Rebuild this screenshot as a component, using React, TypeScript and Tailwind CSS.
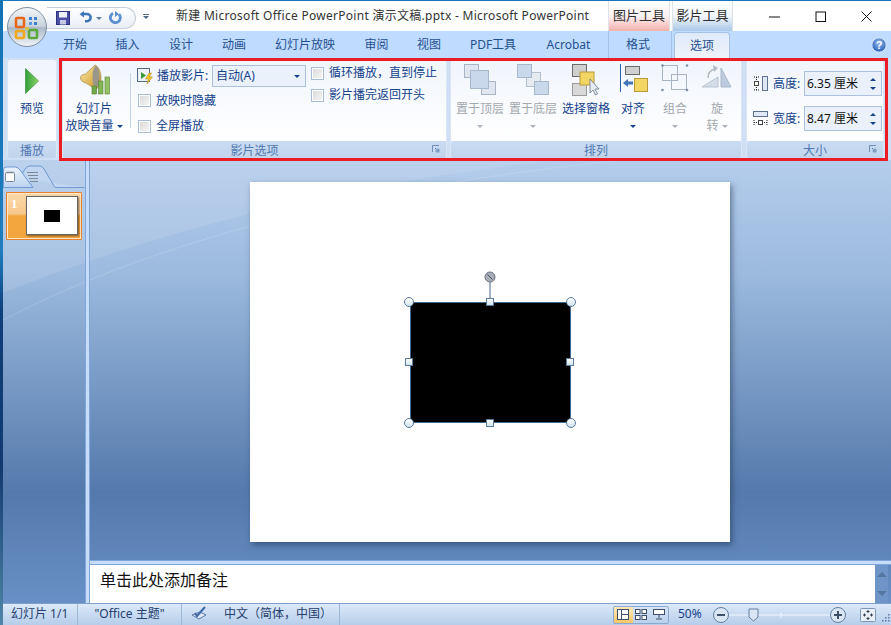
import React from 'react';

const blue = 'text-[#15428b]';

function OfficeButton() {
  return (
    <svg width="42" height="42" viewBox="0 0 42 42" className="absolute left-[3px] top-[6px]">
      <defs>
        <linearGradient id="orb" x1="0" y1="0" x2="0" y2="1">
          <stop offset="0" stopColor="#f4f6f8" />
          <stop offset="0.48" stopColor="#c9d3de" />
          <stop offset="0.52" stopColor="#aab9c8" />
          <stop offset="1" stopColor="#f2f5f8" />
        </linearGradient>
      </defs>
      <circle cx="21" cy="21" r="19.5" fill="url(#orb)" stroke="#7d8ea3" strokeWidth="1" />
      <rect x="10" y="12" width="8" height="9" rx="1" fill="none" stroke="#e8681a" strokeWidth="2.6" />
      <rect x="23" y="11" width="3" height="3" fill="#3d7fd0" />
      <rect x="28" y="11" width="3" height="3" fill="#3d7fd0" />
      <rect x="23" y="16" width="3" height="3" fill="#5a9bdc" />
      <rect x="28" y="16" width="3" height="3" fill="#3d7fd0" />
      <rect x="10" y="25" width="8" height="7" rx="1" fill="none" stroke="#f0a81e" strokeWidth="2.6" />
      <rect x="23" y="24" width="8" height="8" rx="1" fill="none" stroke="#5aa83a" strokeWidth="2.6" />
      <rect x="19" y="21" width="4" height="3" fill="#d9c04a" />
    </svg>
  );
}

function QuickAccess() {
  return (
    <div className="absolute left-[44px] top-[7px] flex h-[22px] w-[89px] items-center rounded-r-[11px] border border-l-0 border-[#c6cfda] bg-gradient-to-b from-white to-[#e8eef6] pl-[9px]">
      <svg width="14" height="14" viewBox="0 0 14 14">
        <rect x="0.5" y="0.5" width="13" height="13" fill="#4a4fa8" stroke="#2d3080" />
        <rect x="3" y="1" width="8" height="5.5" fill="#eef0fa" />
        <rect x="4" y="9" width="6" height="4.5" fill="#c4c8e2" />
      </svg>
      <svg width="13" height="14" viewBox="0 0 13 14" className="ml-[9px]">
        <path d="M3 3h5a3.6 3.6 0 0 1 0 7.2H6" fill="none" stroke="#3f74b8" strokeWidth="2.6" />
        <path d="M5 0v6.5L0.5 3.2z" fill="#3f74b8" />
      </svg>
      <span className="ml-[4px] h-0 w-0 border-x-[3px] border-t-[3px] border-x-transparent border-t-[#5d7da6]" />
      <svg width="13" height="14" viewBox="0 0 13 14" className="ml-[7px]">
        <path d="M4 2.2a5 5 0 1 0 6 1" fill="none" stroke="#5b8fd0" strokeWidth="2.8" />
        <path d="M6 0v6l4-3z" fill="#5b8fd0" />
      </svg>
    </div>
  );
}

function TitleBar() {
  return (
    <div className="flex h-[31px] items-center border-t border-t-[#1a76b8] bg-white">
      <div className="ml-[138px] flex w-[10px] flex-col items-center gap-[1px]">
        <span className="h-px w-[6px] bg-[#50688a]" />
        <span className="h-0 w-0 border-x-[3px] border-t-[3px] border-x-transparent border-t-[#50688a]" />
      </div>
      <div className="ml-[25px] w-[432px] whitespace-nowrap text-[12px] tracking-[0.28px] text-[#333]">
        新建 Microsoft Office PowerPoint 演示文稿.pptx - Microsoft PowerPoint
      </div>
      <div className="flex h-full w-[62px] items-center justify-center border-x border-[#dfe3e8] bg-gradient-to-b from-white via-[#fbf2f2] to-[#f2b0ac] text-[13px] text-[#2f2f2f]">
        图片工具
      </div>
      <div className="ml-[2px] flex h-full w-[61px] items-center justify-center border-x border-[#dfe3e8] bg-gradient-to-b from-white via-[#f2f6fb] to-[#a9c8e8] text-[13px] text-[#2f2f2f]">
        影片工具
      </div>
      <svg width="15" height="15" viewBox="0 0 15 15" className="ml-[34px]">
        <path d="M2 8h11" stroke="#111" strokeWidth="1" />
      </svg>
      <svg width="15" height="15" viewBox="0 0 15 15" className="ml-[31px]">
        <rect x="3" y="3" width="9.5" height="9.5" fill="none" stroke="#111" strokeWidth="1" />
      </svg>
      <svg width="15" height="15" viewBox="0 0 15 15" className="ml-[31px]">
        <path d="M2.5 2.5l10 10M12.5 2.5l-10 10" stroke="#111" strokeWidth="1" />
      </svg>
    </div>
  );
}

function TabRow() {
  const tabs: [string, string][] = [
    ['开始', 'w-[52px]'],
    ['插入', 'w-[53px]'],
    ['设计', 'w-[54px]'],
    ['动画', 'w-[52px]'],
    ['幻灯片放映', 'w-[90px]'],
    ['审阅', 'w-[53px]'],
    ['视图', 'w-[52px]'],
    ['PDF工具', 'w-[76px]'],
    ['Acrobat', 'w-[75px]'],
  ];
  return (
    <div className="flex h-[27px] items-center bg-[#bfdbff] pl-[46px] text-[12px] text-[#25508f]">
      {tabs.map(([label, w]) => (
        <div key={label} className={`${w} text-center`}>
          {label}
        </div>
      ))}
      <div className="ml-[2px] flex h-full w-[64px] items-center justify-center border-x border-[#a9c4e2] pr-[4px]">格式</div>
      <div className="ml-[2px] flex h-[26px] w-[56px] items-center justify-center self-end rounded-t-[4px] border border-b-0 border-[#a5c2e4] bg-gradient-to-b from-[#dfeafa] to-[#eef3fb]">
        选项
      </div>
      <svg width="16" height="16" viewBox="0 0 16 16" className="ml-[141px]">
        <defs>
          <radialGradient id="help" cx="0.5" cy="0.35" r="0.7">
            <stop offset="0" stopColor="#8fb8ea" />
            <stop offset="1" stopColor="#2257b4" />
          </radialGradient>
        </defs>
        <circle cx="8" cy="8" r="7.2" fill="url(#help)" stroke="#dbe8f8" />
        <text x="8" y="12" textAnchor="middle" fontSize="11" fontWeight="700" fill="#fff" fontFamily="Liberation Sans, sans-serif">?</text>
      </svg>
    </div>
  );
}

function Launcher() {
  return (
    <svg width="8" height="8" viewBox="0 0 8 8" className="absolute right-[6px] top-[4px]">
      <path d="M0.5 7V0.5H7" fill="none" stroke="#6f8fb6" />
      <path d="M3 3l3 3M6 3.5V6H3.5" fill="none" stroke="#5d7da6" />
      <rect x="4" y="4" width="3.5" height="3.5" fill="#7f9dc2" />
    </svg>
  );
}

function Group({ title, launcher, className, children }: { title: string; launcher?: boolean; className: string; children: React.ReactNode }) {
  return (
    <div className={`flex h-[98px] flex-col overflow-hidden rounded-[3px] border-x border-[#dbe6f4] ${className}`}>
      <div className="flex h-[81px] bg-gradient-to-b from-[#f0f5fc] via-[#f8fafe] to-white">{children}</div>
      <div className="relative h-[17px] bg-gradient-to-b from-[#c9dcf3] to-[#c2d4ec] text-center text-[12px] leading-[19px] text-[#4f78b0]">
        {title}
        {launcher && <Launcher />}
      </div>
    </div>
  );
}

function Check({ label }: { label: string }) {
  return (
    <div className="flex items-center">
      <span className="h-[13px] w-[13px] border border-[#a8bcd6] bg-gradient-to-br from-[#d8d8d8] to-[#f8f8f8] shadow-[inset_0_0_0_1px_#fff]" />
      <span className={`ml-[5px] whitespace-nowrap text-[12px] ${blue}`}>{label}</span>
    </div>
  );
}

function SpeakerIcon() {
  return (
    <svg width="32" height="32" viewBox="0 0 32 32" className="ml-[3px]">
      <defs>
        <linearGradient id="spk" x1="0" y1="0" x2="1" y2="1">
          <stop offset="0" stopColor="#fbe8ae" />
          <stop offset="0.6" stopColor="#e0b552" />
          <stop offset="1" stopColor="#b9842c" />
        </linearGradient>
      </defs>
      <path d="M0.5 14c0-2 1.5-3.5 5-4L15 1c3 1 6 6 6 13s-3 11-6 11L6 19c-3.5-.5-5.5-3-5.5-5z" fill="url(#spk)" stroke="#a88a4e" strokeWidth="0.7" />
      <ellipse cx="16" cy="13" rx="3.5" ry="11" fill="#9a968a" />
      <rect x="12" y="22" width="4.5" height="8" fill="#74a94a" stroke="#4f7d2d" strokeWidth="0.6" />
      <rect x="18.5" y="17" width="4.5" height="13" fill="#84b856" stroke="#4f7d2d" strokeWidth="0.6" />
      <rect x="25" y="13" width="4.5" height="17" fill="#96c266" stroke="#4f7d2d" strokeWidth="0.6" />
    </svg>
  );
}

function LayerIcon({ top }: { top: boolean }) {
  const back = 'fill-[#dfe6ef] stroke-[#a6b4c6]';
  const front = 'fill-[#c9d8ea] stroke-[#a6b8ce]';
  return top ? (
    <svg width="32" height="32" viewBox="0 0 32 32">
      <rect x="0.5" y="0.5" width="14" height="13" className={back} />
      <rect x="17.5" y="17.5" width="14" height="13" className={back} />
      <rect x="6.5" y="6.5" width="18" height="18" className={front} />
    </svg>
  ) : (
    <svg width="32" height="32" viewBox="0 0 32 32">
      <rect x="9.5" y="8.5" width="14" height="14" className="fill-[#e6ebf2] stroke-[#b4c0d0]" />
      <rect x="0.5" y="0.5" width="14" height="13" className={front} />
      <rect x="17.5" y="17.5" width="14" height="13" className={front} />
    </svg>
  );
}

function PaneIcon() {
  return (
    <svg width="28" height="32" viewBox="0 0 28 32">
      <rect x="0.5" y="0.5" width="14" height="12" fill="#cfcfcf" stroke="#6b6b6b" />
      <rect x="0.5" y="19.5" width="14" height="12" fill="#d8d8d8" stroke="#9a9a9a" />
      <rect x="8" y="8" width="14" height="13" fill="#f3d564" stroke="#b89a3c" />
      <path d="M18 15v14l3-3 2.5 5 2-1-2.5-5h4z" fill="#e8edf4" stroke="#6a7686" strokeWidth="0.8" />
    </svg>
  );
}

function AlignIcon() {
  return (
    <svg width="28" height="30" viewBox="0 0 28 30" className="ml-[2px]">
      <path d="M0.5 0v28" stroke="#2b62ad" />
      <rect x="5.5" y="2.5" width="14" height="8" fill="#cfd0d2" stroke="#6b6b6b" />
      <rect x="14.5" y="14.5" width="13" height="13" fill="#f3d564" stroke="#b89a3c" />
      <path d="M3 19l5-4v2.5h5v3H8V23z" fill="#3f74b8" />
    </svg>
  );
}

function GroupIcon() {
  return (
    <svg width="28" height="28" viewBox="0 0 28 28">
      <rect x="1.5" y="1.5" width="15" height="15" fill="none" stroke="#a8b4c4" />
      <rect x="10.5" y="10.5" width="15" height="15" fill="none" stroke="#a8b4c4" />
      <circle cx="1.5" cy="1.5" r="1.3" fill="#7f8ea3" />
      <circle cx="26" cy="1.5" r="1.3" fill="#7f8ea3" />
      <circle cx="1.5" cy="26" r="1.3" fill="#7f8ea3" />
      <circle cx="26" cy="26" r="1.3" fill="#7f8ea3" />
    </svg>
  );
}

function RotateIcon() {
  return (
    <svg width="32" height="28" viewBox="0 0 32 28">
      <path d="M1 23l16-10v10z" fill="#d5dde8" stroke="#b7c3d2" />
      <path d="M20 23V4l10 19z" fill="#bccbdd" stroke="#a9b8ca" />
      <path d="M7 14c0-5 3-8 7-9" fill="none" stroke="#b0bac7" strokeWidth="1.5" />
      <path d="M12 1l5 3-4 4z" fill="#b0bac7" />
    </svg>
  );
}

function Arrow({ disabled }: { disabled?: boolean }) {
  return <span className={`inline-block h-0 w-0 border-x-[3px] border-t-[3px] border-x-transparent align-middle ${disabled ? 'border-t-[#a9b2bd]' : 'border-t-[#15428b]'}`} />;
}

function ArrangeButton({ w, icon, label, disabled, rotate, noArrow }: { w: string; icon: React.ReactNode; label: string; disabled?: boolean; rotate?: boolean; noArrow?: boolean }) {
  return (
    <div className={`${w} flex flex-col items-center pt-[4px] text-[12px] leading-[17px] ${disabled ? 'text-[#a3a8ae]' : blue}`}>
      <div className="flex h-[33px] items-start">{icon}</div>
      <div className="mt-[3px] whitespace-nowrap">{rotate ? '旋' : label}</div>
      {!noArrow && (
        <div className="whitespace-nowrap">
          {rotate && <span className="mr-[3px]">转</span>}
          <Arrow disabled={disabled} />
        </div>
      )}
    </div>
  );
}

function SizeRow({ label, value, icon }: { label: string; value: string; icon: React.ReactNode }) {
  return (
    <div className="flex h-[25px] items-center pl-[5px]">
      <div className="flex w-[16px] justify-center">{icon}</div>
      <span className={`ml-[5px] w-[31px] whitespace-nowrap text-[12px] ${blue}`}>{label}</span>
      <div className="flex h-full w-[78px] items-center border border-[#abc1de] bg-[#eaf1fb] pl-[2px] text-[12px] text-[#111]">
        <span className="w-[63px] whitespace-nowrap">{value}</span>
        <div className="flex flex-col items-center gap-[6px]">
          <span className="h-0 w-0 border-x-[3px] border-b-[3px] border-x-transparent border-b-[#15428b]" />
          <span className="h-0 w-0 border-x-[3px] border-t-[3px] border-x-transparent border-t-[#15428b]" />
        </div>
      </div>
    </div>
  );
}

function Ribbon() {
  return (
    <div className="relative flex h-[102px] bg-[#cfe0f6] pl-[4px] pt-[2px]">
      <Group title="播放" className="w-[50px]">
        <div className={`flex w-full flex-col items-center pt-[8px] text-[12px] ${blue}`}>
          <svg width="14" height="26" viewBox="0 0 14 26">
            <defs>
              <linearGradient id="play" x1="0" y1="0" x2="1" y2="0">
                <stop offset="0" stopColor="#2f9e3a" />
                <stop offset="1" stopColor="#8ed66a" />
              </linearGradient>
            </defs>
            <path d="M0.5 0.5L13.5 13 0.5 25.5z" fill="url(#play)" stroke="#3a8f3a" strokeWidth="0.7" />
          </svg>
          <span className="mt-[6px] leading-[17px]">预览</span>
        </div>
      </Group>
      <Group title="影片选项" launcher className="ml-[5px] w-[385px]">
        <div className={`flex w-[67px] flex-col items-center pr-[5px] pt-[4px] text-[12px] leading-[17px] ${blue}`}>
          <div className="h-[32px]"><SpeakerIcon /></div>
          <div className="mt-[4px]">幻灯片</div>
          <div className="whitespace-nowrap">放映音量 <Arrow /></div>
        </div>
        <div className="mt-[13px] h-[55px] w-px bg-[#c5d3e6]" />
        <div className="ml-[6px] flex w-[175px] flex-col pt-[5px]">
          <div className="flex h-[22px] items-center">
            <svg width="18" height="18" viewBox="0 0 18 18">
              <rect x="0.5" y="1.5" width="12" height="13" fill="#eef2f7" stroke="#566b85" />
              <path d="M4 5l5 3.5L4 12z" fill="#3f9a3c" />
              <path d="M12 6l-3.5 6h3l-1.5 5 5.5-7h-3l2-4z" fill="#f3c62e" stroke="#a98518" strokeWidth="0.5" />
            </svg>
            <span className={`ml-[2px] w-[55px] whitespace-nowrap text-[12px] ${blue}`}>播放影片:</span>
            <div className={`flex h-full w-[94px] items-center border border-[#abc1de] bg-[#eaf1fb] pl-[3px] pr-[5px] text-[12px] ${blue}`}>
              <span className="flex-1">自动(A)</span>
              <Arrow />
            </div>
          </div>
          <div className="flex h-[27px] items-center pl-[1px]"><Check label="放映时隐藏" /></div>
          <div className="flex h-[24px] items-center pl-[1px]"><Check label="全屏播放" /></div>
        </div>
        <div className="ml-[-1px] flex flex-col pt-[2px]">
          <div className="flex h-[22px] items-center"><Check label="循环播放，直到停止" /></div>
          <div className="flex h-[22px] items-center"><Check label="影片播完返回开头" /></div>
        </div>
      </Group>
      <Group title="排列" className="ml-[3px] w-[292px]">
        <div className="flex pl-[3px]">
          <ArrangeButton w="w-[52px]" icon={<LayerIcon top />} label="置于顶层" disabled />
          <ArrangeButton w="w-[54px]" icon={<LayerIcon top={false} />} label="置于底层" disabled />
          <ArrangeButton w="w-[52px]" icon={<PaneIcon />} label="选择窗格" noArrow />
          <ArrangeButton w="w-[42px]" icon={<AlignIcon />} label="对齐" />
          <ArrangeButton w="w-[42px]" icon={<GroupIcon />} label="组合" disabled />
          <ArrangeButton w="w-[42px]" icon={<RotateIcon />} label="旋转" disabled rotate />
        </div>
      </Group>
      <Group title="大小" launcher className="ml-[4px] w-[138px]">
        <div className="flex flex-col gap-[10px] pt-[11px]">
          <SizeRow
            label="高度:"
            value="6.35 厘米"
            icon={
              <svg width="15" height="15" viewBox="0 0 15 15">
                <rect x="9.5" y="0.5" width="5" height="14" fill="#dfe8f4" stroke="#5d7290" />
                <rect x="1.5" y="5.5" width="4" height="4" fill="#fff" stroke="#444" />
                <path d="M1 1h5M1 14h5M3.5 1v3M3.5 11v3" stroke="#222" strokeDasharray="1 1" />
              </svg>
            }
          />
          <SizeRow
            label="宽度:"
            value="8.47 厘米"
            icon={
              <svg width="15" height="15" viewBox="0 0 15 15">
                <rect x="0.5" y="0.5" width="14" height="5" fill="#dfe8f4" stroke="#5d7290" />
                <rect x="5.5" y="9.5" width="4" height="4" fill="#fff" stroke="#444" />
                <path d="M1 9v5M14 9v5M1 11.5h3M11 11.5h3" stroke="#222" strokeDasharray="1 1" />
              </svg>
            }
          />
        </div>
      </Group>
    </div>
  );
}

function ThumbPanel() {
  return (
    <div className="relative flex w-[82px] flex-col">
      <svg width="82" height="28" viewBox="0 0 82 28" className="mt-[4px]">
        <defs>
          <linearGradient id="tabOn" x1="0" y1="0" x2="0" y2="1">
            <stop offset="0" stopColor="#eaf2fc" />
            <stop offset="1" stopColor="#bcd3f0" />
          </linearGradient>
        </defs>
        <path d="M17 14L22 5Q24 2 27 2H37Q39 2 41 5L52 23.5H81.5" fill="#c2d6f1" stroke="#6f9ad2" />
        <path d="M0.5 23.5V6Q0.5 3 3.5 3H12Q15 3 17 6L30 23.5z" fill="url(#tabOn)" stroke="#6f9ad2" />
        <rect x="2.5" y="8.5" width="9" height="9" rx="1" fill="#fff" stroke="#7b8794" />
        <path d="M3.5 8.5h7" stroke="#7b8794" strokeWidth="1.5" />
        <path d="M24 8.5h11M25 11.5h10M26 14.5h9M27 17.5h8" stroke="#7b8794" />
      </svg>
      <div className="ml-[3px] flex h-[48px] w-[76px] items-start rounded-[1px] border border-[#e8812a] bg-gradient-to-b from-[#fbd9a8] from-0% via-[#f8c78c] via-45% to-[#f4a63e] to-50% pl-[4px] pt-[3px] shadow-[inset_0_0_0_1px_#fde7c8]">
        <span className="w-[15px] text-[13px] font-bold leading-[16px] text-white [font-family:'Liberation_Serif',serif]">1</span>
        <div className="flex h-[39px] w-[52px] items-center justify-center border border-[#666] bg-white shadow-[1px_1px_2px_rgba(0,0,0,0.5)]">
          <div className="h-[12px] w-[16px] bg-black" />
        </div>
      </div>
    </div>
  );
}

function Handle({ className, round }: { className: string; round?: boolean }) {
  return round ? (
    <span className={`absolute h-[10px] w-[10px] rounded-full border border-[#5b7a9c] bg-gradient-to-b from-white to-[#cfe4ec] ${className}`} />
  ) : (
    <span className={`absolute h-[8px] w-[8px] border border-[#5b7a9c] bg-gradient-to-b from-white to-[#cfe4ec] ${className}`} />
  );
}

function Slide() {
  return (
    <div className="relative h-[360px] w-[480px] bg-white shadow-[2px_3px_6px_rgba(30,50,80,0.55)]">
      <div className="absolute left-[160px] top-[120px] h-[121px] w-[161px] border border-[#3f6a94] bg-black" />
      <span className="absolute left-[239px] top-[100px] h-[20px] w-[2px] bg-[#a3b4c6]" />
      <svg width="12" height="12" viewBox="0 0 12 12" className="absolute left-[234px] top-[89px]">
        <circle cx="6" cy="6" r="5" fill="#a9adb8" stroke="#6a7080" />
        <path d="M3.5 3.5l5 5" stroke="#4a5060" />
      </svg>
      <Handle round className="left-[154px] top-[115px]" />
      <Handle round className="left-[316px] top-[115px]" />
      <Handle round className="left-[154px] top-[236px]" />
      <Handle round className="left-[316px] top-[236px]" />
      <Handle className="left-[236px] top-[116px]" />
      <Handle className="left-[236px] top-[237px]" />
      <Handle className="left-[155px] top-[176px]" />
      <Handle className="left-[316px] top-[176px]" />
    </div>
  );
}

function Main() {
  return (
    <div className="relative flex h-[443px] bg-[linear-gradient(180deg,#b4cdeb_0%,#9dbbdf_25%,#5479ab_75%,#6890c6_100%)]">
      <svg width="888" height="443" viewBox="0 0 888 443" className="absolute left-0 top-0">
        <path d="M0 133Q260 30 560 0H0z" fill="#ffffff" fillOpacity="0.1" />
        <path d="M0 160Q230 40 620 0" fill="none" stroke="#ffffff" strokeOpacity="0.16" />
      </svg>
      <div className="relative flex">
        <ThumbPanel />
        <div className="h-full w-[5px] border-x border-[#7fa6dc] bg-[#c6dcf8]" />
      </div>
      <div className="relative flex flex-1 flex-col">
        <div className="flex h-[400px] justify-center pr-[2px] pt-[22px]">
          <Slide />
        </div>
        <div className="flex h-[43px] flex-col">
          <div className="h-[5px] border-y border-[#7fa6dc] bg-[#c6dcf8]" />
          <div className="flex flex-1">
            <div className="flex flex-1 items-center bg-white pb-[9px] pl-[10px] text-[16px] text-[#111]">单击此处添加备注</div>
            <div className="flex w-[13px] flex-col items-center justify-between bg-[#6f94c8] py-[7px]">
              <span className="h-0 w-0 border-x-[5px] border-b-[5px] border-x-transparent border-b-[#55779f]" />
              <span className="h-0 w-0 border-x-[5px] border-t-[5px] border-x-transparent border-t-[#55779f]" />
            </div>
            <div className="w-[3px]" />
          </div>
        </div>
      </div>
    </div>
  );
}

function StatusBar() {
  return (
    <div className="flex h-[22px] items-center border-t border-[#7d9fcb] bg-gradient-to-b from-[#dce9f9] to-[#b6cdea] text-[12px] text-[#25406e]">
      <div className="flex h-full w-[75px] items-center border-r border-[#9db6d6] pb-[2px] pl-[8px]">幻灯片 1/1</div>
      <div className="flex h-full w-[104px] items-center justify-center border-r border-[#9db6d6] pb-[2px]">"Office 主题"</div>
      <div className="flex h-full w-[158px] items-center border-r border-[#9db6d6] pb-[2px] pl-[9px]">
        <svg width="17" height="15" viewBox="0 0 17 15">
          <path d="M1 9l8-3 6 3-7 4z" fill="#dfe9f6" stroke="#5c7ba8" />
          <path d="M4 7l2 3 8-9" fill="none" stroke="#3f6aa8" strokeWidth="2" />
        </svg>
        <span className="ml-[16px] whitespace-nowrap">中文（简体，中国）</span>
      </div>
      <div className="ml-auto flex h-[18px] w-[56px] items-center overflow-hidden rounded-[2px] border border-[#8ba9cf]">
        <div className="flex h-full w-[19px] items-center justify-center bg-gradient-to-b from-[#fde9b8] to-[#f7c566]">
          <svg width="12" height="11" viewBox="0 0 12 11"><rect x="0.5" y="0.5" width="11" height="10" fill="#fff" stroke="#3d4f66" /><path d="M4.5 0.5v10M4.5 5.5h7" stroke="#3d4f66" /></svg>
        </div>
        <div className="flex h-full w-[18px] items-center justify-center">
          <svg width="12" height="11" viewBox="0 0 12 11"><rect x="0.5" y="0.5" width="4.5" height="4" fill="#fff" stroke="#3d4f66" /><rect x="7" y="0.5" width="4.5" height="4" fill="#fff" stroke="#3d4f66" /><rect x="0.5" y="6.5" width="4.5" height="4" fill="#fff" stroke="#3d4f66" /><rect x="7" y="6.5" width="4.5" height="4" fill="#fff" stroke="#3d4f66" /></svg>
        </div>
        <div className="flex h-full w-[18px] items-center justify-center">
          <svg width="12" height="11" viewBox="0 0 12 11"><rect x="0.5" y="0.5" width="11" height="5" fill="#fff" stroke="#3d4f66" /><path d="M6 6v3M3 10h6" stroke="#3d4f66" /></svg>
        </div>
      </div>
      <span className="ml-[9px] w-[25px] pb-[2px] text-[#15428b]">50%</span>
      <svg width="154" height="18" viewBox="0 0 154 18" className="ml-[9px]">
        <circle cx="9" cy="9" r="7.5" fill="#dbe6f4" stroke="#64809f" />
        <path d="M5 9h8" stroke="#3d4f66" strokeWidth="2" />
        <path d="M17 9h102" stroke="#f2f7fd" strokeWidth="1" />
        <path d="M69 6v6" stroke="#f2f7fd" />
        <path d="M37 3h9v8l-4.5 4-4.5-4z" fill="#dbe6f4" stroke="#64809f" />
        <circle cx="126" cy="9" r="7.5" fill="#dbe6f4" stroke="#64809f" />
        <path d="M122 9h8M126 5v8" stroke="#3d4f66" strokeWidth="2" />
      </svg>
      <svg width="16" height="18" viewBox="0 0 16 18" className="ml-[-6px]">
        <rect x="0.5" y="2.5" width="15" height="13" rx="1" fill="#e9eff7" stroke="#7d97b8" />
        <path d="M8 4v3M6.5 5.5h3M3 9h3M4.5 7.5v3M10 9h3M11.5 7.5v3M8 11v3M6.5 12.5h3" stroke="#2c3a4e" />
      </svg>
      <svg width="10" height="10" viewBox="0 0 10 10" className="mb-[2px] ml-[4px] mr-[1px] self-end">
        <path d="M8 1h1.5v1.5H8zM5 4h1.5v1.5H5zM8 4h1.5v1.5H8zM2 7h1.5v1.5H2zM5 7h1.5v1.5H5zM8 7h1.5v1.5H8z" fill="#5c7ba8" />
      </svg>
    </div>
  );
}

export default function App() {
  return (
    <div className="relative flex h-[625px] w-[891px] overflow-hidden [font-family:'Noto_Sans','Noto_Sans_CJK_SC',sans-serif]">
      <div className="w-[3px] bg-[linear-gradient(180deg,#1272b4_0%,#1f7dbd_40%,#0d3f7a_50%,#123a70_75%,#4f86a8_100%)]" />
      <div className="relative flex w-[888px] flex-col">
        <TitleBar />
        <TabRow />
        <Ribbon />
        <Main />
        <StatusBar />
        <OfficeButton />
        <QuickAccess />
      </div>
      {/* red box drawn over the ribbon */}
      <div className="absolute left-[59px] top-[58px] h-[103px] w-[829px] border-[3px] border-[#ec1c24]" />
    </div>
  );
}
